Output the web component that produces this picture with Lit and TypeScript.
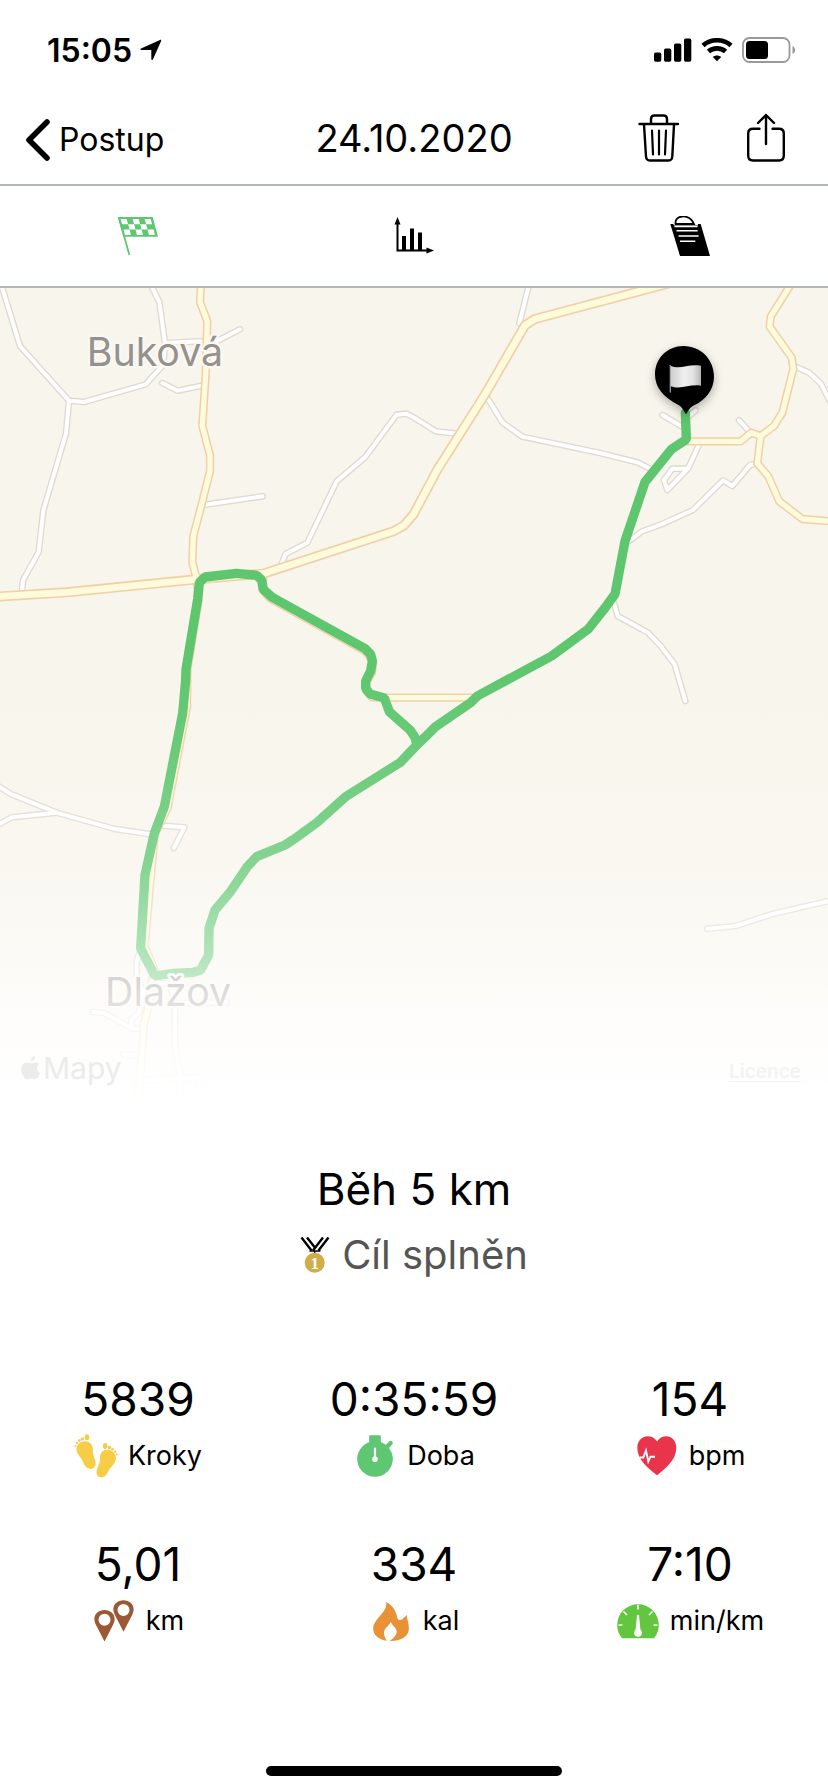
import { LitElement, html, svg, css } from "lit";
import { customElement, state } from "lit/decorators.js";

const minorRoads = [
  "5,-6 60,174 207,338 252,342 437,289 490,230 495,165 478,42 452,-10",
  "207,338 198,437 130,667 116,792 69,877 66,912",
  "495,165 602,160 622,170",
  "640,165 720,124",
  "487,285 533,308 610,292",
  "615,650 788,625",
  "842,835 857,798 922,764 1010,580 1095,508 1190,380 1220,377 1242,389 1308,430 1370,437",
  "1586,-6 1558,106",
  "1457,322 1508,404 1567,446 1800,495 1912,523 1965,550",
  "2099,466 2064,542 2017,542 1992,576 2002,606 2064,542",
  "2272,526 2250,531 2197,594 2169,577 2079,666 1982,710 1926,730 1887,759",
  "2217,397 2247,429",
  "1987,381 2047,416",
  "2087,367 2062,389",
  "2382,234 2427,254 2463,287 2490,340",
  "1842,944 1853,984 1944,1034 1982,1074 2024,1129 2056,1239",
  "-5,1494 35,1519 170,1574 340,1622 460,1640",
  "-5,1610 35,1588 170,1574",
  "485,1613 553,1618 521,1681",
  "2122,1922 2207,1914 2317,1878 2490,1838",
  "415,2001 410,2026 410,2061 435,2126 415,2176 395,2194 393,2216",
  "278,2172 312,2175 395,2221 425,2224",
  "370,2299 420,2303",
  "455,2081 510,2088 525,2146 525,2276 542,2371 540,2420",
  "525,2146 680,2143",
  "430,2376 598,2369 600,2420",
];

const localRoads = [
  "603,-10 600,42 622,100 617,260 607,414 630,502 630,549 605,649 580,744 577,822 590,874 596,934 562,1144 561,1256 503,1560 464,1640 448,1816 434,1976 466,2050 455,2080 447,2150 432,2206 426,2290 416,2420",
  "790,857 787,905 810,931 1097,1090 1120,1122 1116,1152 1099,1184 1099,1208 1116,1228 1160,1229 1430,1229",
  "2372,-10 2312,86 2309,116 2375,209 2380,242 2347,374 2322,414 2282,444 2254,434 2222,460 2060,460",
  "2282,444 2272,526 2305,565 2338,640 2407,693 2490,700",
];

const mainRoad =
  "-10,926 200,913 590,874 790,857 1180,730 1212,712 1240,680 1312,545 1457,316 1575,112 1605,93 2000,-12";

const route =
  "2056,375 2059,454 2014,484 1935,582 1875,759 1845,918 1817,957 1764,1024 1655,1104 1432,1224 1412,1244 1307,1316 1242,1380 1200,1424 1037,1526 950,1604 890,1648 855,1671 770,1706 742,1736 690,1813 645,1866 627,1921 626,2001 602,2046 580,2053 520,2056 465,2064 422,1981 435,1761 463,1636 493,1556 548,1276 557,1176 558,1144 593,934 598,884 615,867 710,856 770,862 785,876 790,904 815,927 1095,1082 1112,1099 1117,1119 1112,1149 1097,1179 1097,1201 1110,1218 1153,1230 1168,1271 1230,1326 1245,1348 1250,1370";

const checkerCells = [0, 1, 2].flatMap((row) =>
  [0, 1, 2, 3, 4]
    .filter((col) => (row + col) % 2 === 0)
    .map((col) => [col * 6, row * 5.3])
);

const tabs = [
  {
    id: "map",
    label: "Mapa",
    icon: svg`
      <path d="M0 1H34.7L40 20.7H5.3Z" fill="currentColor"/>
      <path d="M.8 1.5L11.4 39" stroke="currentColor" stroke-width="1.8"/>
      <g transform="translate(2.7 3) skewX(15)" fill="#fff">
        ${checkerCells.map(([x, y]) => svg`<rect x=${x} y=${y} width="6" height="5.3"/>`)}
      </g>`,
  },
  {
    id: "chart",
    label: "Grafy",
    icon: svg`
      <path d="M3.5 6V34.5H35" fill="none" stroke="currentColor" stroke-width="2"/>
      <path d="M3.5 1L6.5 8.5H.5ZM40 34.5L32.5 31.5V37.5Z" fill="currentColor"/>
      <path d="M8 20h4v14H8ZM16 12.5h4V34h-4ZM24 16.5h4V34h-4Z" fill="currentColor"/>`,
  },
  {
    id: "notes",
    label: "Poznámky",
    icon: svg`
      <path d="M.3 8H30.7L40 40H10Z" fill="currentColor"/>
      <path d="M3.5 8H28" stroke="#fff" stroke-width="2.4"/>
      <path d="M5.6 8C4 -1 19 -3 24 8Z" fill="#fff" stroke="currentColor" stroke-width="1.8"/>
      <path d="M4.4 10.4H27.6M6.5 14.7H27.6M8.5 20H28.6M10 25.2H25.3" stroke="#fff" stroke-width="1.6"/>`,
  },
];

const stats = [
  {
    value: "5839",
    label: "Kroky",
    icon: svg`<g fill="#f8cd46">
      <path d="M11 7.3C16 7 19.3 11.5 18.9 17C18.6 22 22.2 26 21.7 30.5C21.2 34.5 17 36 13.5 34C9.5 31.5 9.5 27.5 6.5 23.5C3 19 1.6 16.5 3 12.5C4.3 9 7.5 7.5 11 7.3Z"/>
      <ellipse cx="13" cy="3.2" rx="2.3" ry="2.9"/><circle cx="8.3" cy="4.9" r="1.7"/><circle cx="5.3" cy="6.6" r="1.4"/><circle cx="3" cy="9" r="1.2"/><circle cx="1.4" cy="12" r="1.1"/>
      <path d="M34.5 15.8C29 15.3 25.6 19 25.9 24.5C26.1 30 22.8 33.5 22.6 38.5C22.4 42.5 26.5 44.5 30 42.7C33.5 40.8 33.5 37.5 36.5 34C40.5 29.5 42.8 26.5 41.7 22.5C40.7 18.5 38 16.2 34.5 15.8Z"/>
      <ellipse cx="31.2" cy="12" rx="2.3" ry="2.9"/><circle cx="35.5" cy="13.5" r="1.7"/><circle cx="38.5" cy="15.3" r="1.4"/><circle cx="41" cy="17.6" r="1.2"/><circle cx="42.7" cy="20.5" r="1.1"/></g>`,
  },
  {
    value: "0:35:59",
    label: "Doba",
    icon: svg`
      <circle cx="22" cy="25" r="17.8" fill="#5fc772"/>
      <rect x="16.2" y="1.3" width="11.6" height="9" rx="1" fill="#5fc772"/>
      <path d="M32 15L37.6 9" stroke="#5fc772" stroke-width="4.4" stroke-linecap="round"/>
      <path d="M22 14.5V24" stroke="#fff" stroke-width="2.2" stroke-linecap="round"/>
      <circle cx="22" cy="25.3" r="2.8" fill="#fff"/>`,
  },
  {
    value: "154",
    label: "bpm",
    icon: svg`
      <path d="M22 41.3C14 35 2.3 26 2.3 14C2.3 6.5 7.5 2.3 12.5 2.3C16.5 2.3 20 4 22 7.5C24 4 27.5 2.3 31.5 2.3C36.5 2.3 41.3 6.5 41.3 14C41.3 26 30 35 22 41.3Z" fill="#ea344c"/>
      <path d="M4.5 23.5H8.3L11 16.5L13.3 27.5L15.5 22.7H20" fill="none" stroke="#fff" stroke-width="1.9"/>`,
  },
  {
    value: "5,01",
    label: "km",
    icon: svg`<g fill="#9a5834" fill-rule="evenodd">
      <path d="M12.5 42.5L4 26C-.5 17.5 5 11 12.5 11S25.5 17.5 21 26ZM12.5 14.7A6 6 0 1 0 12.5 26.7A6 6 0 1 0 12.5 14.7Z"/>
      <path d="M31.5 32.8L23 16.3C18.5 7.8 24 1.3 31.5 1.3S44.5 7.8 40 16.3ZM31.5 5A6 6 0 1 0 31.5 17A6 6 0 1 0 31.5 5Z"/></g>`,
  },
  {
    value: "334",
    label: "kal",
    icon: svg`<path d="M17.3 3C23 5.5 27.5 12.5 28.5 19.5C29.5 21.5 32 21.5 33.5 20C35.3 18.5 36.5 17.5 37.7 15.8C37.8 20 40 23.5 39.9 30C39.5 38 31 42.3 20.6 42C23.5 40 27.8 36.5 27.7 32.5C27.5 28.5 23.5 27 21.7 22.7C20.5 27 15 29 15 33.5C15 37.5 16.5 40 18 41.8C9.5 40.5 4.2 36 4.2 29.5C4.2 20 18.5 14 17.3 3Z" fill="#e89135"/>`,
  },
  {
    value: "7:10",
    label: "min/km",
    icon: svg`
      <path d="M6 39.3A20.8 20.8 0 1 1 38 39.3Z" fill="#62c73e"/>
      <path d="M22 6V10.5M7.5 12.5L11 16M36.5 12.5L33 16M2.5 26H6.5M41.5 26H37.5" stroke="#fff" stroke-width="1.7"/>
      <path d="M21 16.5Q22 15 23 16.5L24.5 31.5H19.5Z" fill="#fff"/>
      <circle cx="22" cy="33.8" r="3.9" fill="#fff"/>`,
  },
];

@customElement("workout-map")
class WorkoutMap extends LitElement {
  static styles = css`
    :host {
      display: block;
      position: relative;
    }
    .canvas {
      display: block;
      width: 100%;
      height: auto;
    }
    .road {
      fill: none;
      stroke-linecap: round;
      stroke-linejoin: round;
    }
    .minor-edge {
      stroke: #dedad2;
      stroke-width: 20;
    }
    .minor {
      stroke: #fff;
      stroke-width: 12;
    }
    .local-edge {
      stroke: #f1cfa7;
      stroke-width: 25;
    }
    .local {
      stroke: #fdfbdc;
      stroke-width: 16;
    }
    .main-edge {
      stroke: #f1cfa7;
      stroke-width: 30;
    }
    .main {
      stroke: #fdfbdc;
      stroke-width: 20;
    }
    .route {
      fill: none;
      stroke: #5dc66e;
      stroke-width: 28;
      stroke-linejoin: bevel;
      stroke-linecap: round;
    }
    .place {
      font-family: Inter, "Liberation Sans", sans-serif;
      font-size: 118px;
      fill: #94918e;
      stroke: #faf8f3;
      stroke-width: 14px;
      stroke-linejoin: round;
      paint-order: stroke;
    }
    .pin {
      filter: drop-shadow(0 10px 14px rgba(0, 0, 0, 0.3));
    }
    .legal {
      position: absolute;
      left: 21px;
      right: 27px;
      bottom: 24px;
      display: flex;
      align-items: center;
      justify-content: space-between;
    }
    .brand {
      display: flex;
      align-items: center;
      gap: 2px;
      color: #ececec;
      font-size: 30px;
      line-height: 40px;
    }
    .licence {
      padding-top: 8px;
      color: #f3f3f3;
      font-size: 19px;
      font-weight: 600;
      line-height: 32px;
      text-underline-offset: 3px;
    }
  `;

  render() {
    return html`
      <svg class="canvas" viewBox="0 0 2484 2472" role="img" aria-label="Trasa běhu">
        <defs>
          <linearGradient id="fade" x1="0" y1="0" x2="0" y2="1">
            <stop offset="0.45" stop-color="#fff" stop-opacity="0" />
            <stop offset="0.56" stop-color="#fff" stop-opacity="0.08" />
            <stop offset="0.7" stop-color="#fff" stop-opacity="0.25" />
            <stop offset="0.82" stop-color="#fff" stop-opacity="0.55" />
            <stop offset="0.86" stop-color="#fff" stop-opacity="0.7" />
            <stop offset="0.94" stop-color="#fff" stop-opacity="0.9" />
            <stop offset="0.99" stop-color="#fff" />
          </linearGradient>
          <linearGradient id="cloth" x1="0" y1="0" x2="1" y2="0">
            <stop offset="0" stop-color="#cfcfcf" />
            <stop offset="0.45" stop-color="#efefef" />
            <stop offset="0.75" stop-color="#e2e2e2" />
            <stop offset="1" stop-color="#b4b4b4" />
          </linearGradient>
        </defs>
        <rect width="2484" height="2472" fill="#f8f5ec" />
        ${minorRoads.map((p) => svg`<polyline class="road minor-edge" points=${p}/>`)}
        ${minorRoads.map((p) => svg`<polyline class="road minor" points=${p}/>`)}
        ${localRoads.map((p) => svg`<polyline class="road local-edge" points=${p}/>`)}
        <polyline class="road main-edge" points=${mainRoad} />
        ${localRoads.map((p) => svg`<polyline class="road local" points=${p}/>`)}
        <polyline class="road main" points=${mainRoad} />
        <polyline class="route" points=${route} />
        <text class="place" x="260" y="234">Buková</text>
        <text class="place" x="315" y="2154">Dlažov</text>
        <rect width="2484" height="2472" fill="url(#fade)" />
        <path
          class="pin"
          d="M2058 379C2050 366 2046 356 2034 350C1990 328 1965 298 1965 259C1965 210 2003 174 2050 174C2104 174 2142 216 2142 266C2142 306 2116 336 2082 352C2070 358 2066 366 2058 379Z"
        />
        <path d="M2011 232V312" stroke="#8f8f8f" stroke-width="4" stroke-linecap="round" />
        <path d="M2012 234C2042 246 2066 226 2103 233V293C2068 288 2044 306 2012 295Z" fill="url(#cloth)" />
      </svg>
      <div class="legal">
        <span class="brand">
          <svg width="20" height="24" viewBox="0 0 20 24" fill="currentColor" aria-hidden="true">
            <path
              d="M14 0C14.5 3 12 5.5 9.6 5.5C9.3 3 11.5 .6 14 0ZM18.3 8.3C14.8 10.5 15.3 15.5 19 17C18 20 16 23.3 13.8 23.3C12.3 23.3 11.8 22.5 10 22.5S7.7 23.3 6.3 23.3C3.5 23.3 .3 18 .3 13.5C.3 9 3 6.6 5.8 6.6C7.6 6.6 8.8 7.6 10 7.6S12.5 6.5 14.6 6.5C16 6.5 17.5 7.1 18.3 8.3Z"
            />
          </svg>
          Mapy
        </span>
        <a class="licence" href="#licence">Licence</a>
      </div>
    `;
  }
}

@customElement("app-root")
class AppRoot extends LitElement {
  @state() active = "map";

  static styles = css`
    :host {
      display: flex;
      flex-direction: column;
      min-height: 100vh;
      box-sizing: border-box;
      background: #fff;
      color: #000;
      font-family: Inter, "Liberation Sans", sans-serif;
    }
    svg {
      display: block;
      flex: none;
    }
    button {
      display: flex;
      align-items: center;
      justify-content: center;
      margin: 0;
      padding: 0;
      border: 0;
      background: none;
      color: inherit;
      font: inherit;
      cursor: pointer;
    }
    .status {
      display: flex;
      align-items: center;
      justify-content: space-between;
      height: 88px;
      padding: 12px 32px 0 47px;
      box-sizing: border-box;
    }
    .clock {
      display: flex;
      align-items: center;
      gap: 8px;
      font-size: 32px;
      font-weight: 600;
    }
    .indicators {
      display: flex;
      align-items: center;
      gap: 9px;
    }
    .bar {
      display: grid;
      grid-template-columns: 1fr auto 1fr;
      align-items: center;
      height: 96px;
      padding: 0 25px;
      border-bottom: 2px solid #b3b8b8;
    }
    .back {
      justify-self: start;
      gap: 8px;
      padding-top: 8px;
      font-size: 32px;
      line-height: 40px;
    }
    .heading {
      margin: 0;
      padding-top: 4px;
      font-size: 38px;
      font-weight: 400;
      line-height: 48px;
    }
    .actions {
      display: flex;
      justify-self: end;
      gap: 66px;
      padding: 4px 17px 0 0;
    }
    .tabs {
      display: grid;
      grid-template-columns: repeat(3, 1fr);
      border-bottom: 2px solid #b3b8b8;
    }
    .tab {
      height: 100px;
    }
    .tab.selected {
      color: #5fc772;
    }
    .summary {
      display: flex;
      flex-direction: column;
      align-items: center;
      gap: 10px;
      padding-top: 49px;
    }
    .title {
      margin: 0;
      font-size: 44px;
      font-weight: 400;
      line-height: 56px;
    }
    .goal {
      display: flex;
      align-items: center;
      gap: 12px;
      margin: 0;
      color: #555;
      font-size: 40px;
      line-height: 56px;
    }
    .medal-number {
      font-family: "Liberation Serif", serif;
      font-size: 17px;
      font-weight: 700;
    }
    .stats {
      display: grid;
      grid-template-columns: repeat(3, 1fr);
      row-gap: 58px;
      margin: 0;
      padding: 88px 0 48px;
    }
    .stat {
      display: flex;
      flex-direction: column-reverse;
      align-items: center;
      gap: 7px;
    }
    .value {
      margin: 0;
      font-size: 46px;
      line-height: 56px;
    }
    .label {
      display: flex;
      align-items: center;
      gap: 10px;
      font-size: 27px;
      line-height: 44px;
    }
    .home {
      width: 296px;
      height: 10px;
      margin: auto auto 16px;
      border-radius: 5px;
      background: #000;
    }
  `;

  render() {
    return html`
      <div class="status">
        <div class="clock">
          <span>15:05</span>
          <svg width="22" height="22" viewBox="0 0 22 22" aria-hidden="true">
            <path d="M1 9.5L20 1C21 .6 21.5 1.2 21 2.2L13 20.2C12.5 21.3 11.3 21 11.3 19.9V11H1.6C.3 11 0 10 1 9.5Z" />
          </svg>
        </div>
        <div class="indicators">
          <svg width="38" height="24" viewBox="0 0 38 24" aria-hidden="true">
            <rect x="0" y="14.5" width="7.3" height="9.2" rx="1.7" />
            <rect x="10" y="10.5" width="7.3" height="13.2" rx="1.7" />
            <rect x="20" y="5.5" width="7.3" height="18.2" rx="1.7" />
            <rect x="30" y="0.5" width="7.3" height="23.2" rx="1.7" />
          </svg>
          <svg width="32" height="24" viewBox="0 0 32 24" aria-hidden="true">
            <path d="M2 7.5C9.5 .5 22.5 .5 30 7.5" fill="none" stroke="#000" stroke-width="4.6" />
            <path d="M7.5 13.5C12 9.3 20 9.3 24.5 13.5" fill="none" stroke="#000" stroke-width="4.6" />
            <path d="M16 23.3L11.8 19C14.2 17 17.8 17 20.2 19Z" />
          </svg>
          <svg width="54" height="26" viewBox="0 0 54 26" aria-hidden="true">
            <rect x="1" y="1" width="46.5" height="24" rx="6.5" fill="none" stroke="#999" stroke-width="1.8" />
            <rect x="4" y="4" width="22" height="18" rx="3.5" />
            <path d="M50.5 9C54 10.5 54 15.5 50.5 17Z" fill="#999" />
          </svg>
        </div>
      </div>

      <header class="bar">
        <button class="back" type="button">
          <svg width="26" height="44" viewBox="0 0 26 44" aria-hidden="true">
            <path d="M22 4L4 22L22 40" fill="none" stroke="#000" stroke-width="5.6" stroke-linecap="round" stroke-linejoin="round" />
          </svg>
          Postup
        </button>
        <h1 class="heading">24.10.2020</h1>
        <div class="actions">
          <button type="button" aria-label="Smazat">
            <svg width="42" height="50" viewBox="0 0 42 50" fill="none" stroke="#000" stroke-width="2.4" stroke-linecap="round" stroke-linejoin="round">
              <path d="M1.5 11H40M13 10V6Q13 2.5 16.5 2.5H25.5Q29 2.5 29 6V10M6 11.5L8 43.5Q8.3 47.5 12 47.5H30.5Q34 47.5 34.3 43.5L36 11.5" />
              <path d="M14 17.5L15 41.5M21 17.5V41.5M28 17.5L27 41.5" stroke-width="2.2" />
            </svg>
          </button>
          <button type="button" aria-label="Sdílet">
            <svg width="40" height="50" viewBox="0 0 40 50" fill="none" stroke="#000" stroke-width="2.4" stroke-linecap="round" stroke-linejoin="round">
              <path d="M13.5 15.8H7Q2.2 15.8 2.2 20.5V42.5Q2.2 47.5 7 47.5H33Q37.8 47.5 37.8 42.5V20.5Q37.8 15.8 33 15.8H26.5" />
              <path d="M20 31V2M12 10L20 2L28 10" />
            </svg>
          </button>
        </div>
      </header>

      <nav class="tabs" aria-label="Zobrazení">
        ${tabs.map(
          (tab) => html`
            <button
              type="button"
              class="tab ${this.active === tab.id ? "selected" : ""}"
              aria-label=${tab.label}
              @click=${() => (this.active = tab.id)}
            >
              <svg width="40" height="40" viewBox="0 0 40 40">${tab.icon}</svg>
            </button>
          `
        )}
      </nav>

      <workout-map></workout-map>

      <section class="summary">
        <h2 class="title">Běh 5 km</h2>
        <p class="goal">
          <svg width="30" height="36" viewBox="0 0 30 36" aria-hidden="true">
            <path d="M1.5 .5L11.5 13.5M7 .5L14.5 10M28.5 .5L18.5 13.5M23 .5L13 13.5" fill="none" stroke="#000" stroke-width="2.4" />
            <path d="M9.5 14H20.5M14.7 14V17" stroke="#000" stroke-width="1.4" />
            <circle cx="14.7" cy="25.7" r="10" fill="#cfad48" />
            <text class="medal-number" x="14.7" y="31.5" text-anchor="middle" fill="#fff">1</text>
          </svg>
          Cíl splněn
        </p>
      </section>

      <dl class="stats">
        ${stats.map(
          (s) => html`
            <div class="stat">
              <dt class="label">
                <svg width="44" height="44" viewBox="0 0 44 44" aria-hidden="true">${s.icon}</svg>
                ${s.label}
              </dt>
              <dd class="value">${s.value}</dd>
            </div>
          `
        )}
      </dl>

      <div class="home"></div>
    `;
  }
}
